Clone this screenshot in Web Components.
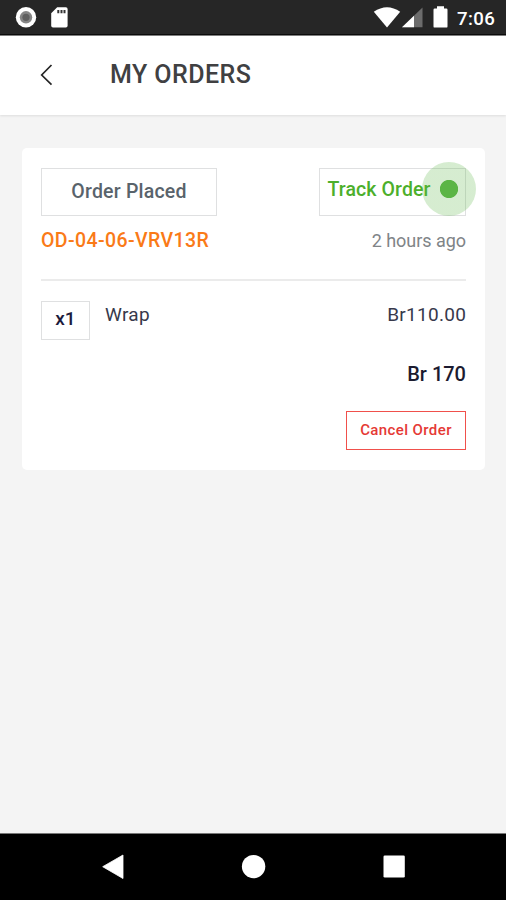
<!DOCTYPE html>
<html lang="en"><head><meta charset="utf-8"><title>My Orders</title>
<style>
html,body{margin:0;height:100%}
body{font-family:Roboto,"Liberation Sans",sans-serif;background:#f4f4f4;overflow:hidden}
</style></head><body>
<orders-screen></orders-screen>
<script>
const define = (name, html) => customElements.define(name, class extends HTMLElement {
  constructor() {
    super();
    const t = document.createElement('template');
    t.innerHTML = html;
    this.attachShadow({mode: 'open'}).append(t.content.cloneNode(true));
  }
});

define('status-bar', `<style>
:host{display:block;height:36px;background:linear-gradient(#262626 34px,#0b0b0b 34px 35px,#777 35px);color:#fff}
.bar{display:flex;height:36px;align-items:flex-start}
svg{display:block;flex:none}
.time{font-size:18.6px;font-weight:500;line-height:22px;margin:8px 0 0 8px;letter-spacing:.4px;white-space:nowrap}
</style><div class="bar">
<svg width="80" height="35" viewBox="0 0 80 35"><circle cx="26" cy="17.3" r="10.2" fill="#fff"/><circle cx="26" cy="17.3" r="6.2" fill="#858585"/><circle cx="26" cy="17.3" r="3.6" fill="#5f5f5f"/><path d="M57.2 7.3h8.6q1.8 0 1.8 1.8v16.6q0 1.8-1.8 1.8H53q-1.800 0-1.800-1.800V13.300z" fill="#fff"/><path d="M57.300 10h2v3.300h-2zM60.500 10h2v3.300h-2zM63.500 10h2v3.300h-2z" fill="#333"/></svg>
<svg width="79" height="35" viewBox="370 0 79 35" style="margin-left:290px"><path d="M373.800 11.800Q387 2.500 400.200 11.800L387 27.600z" fill="#fff"/><path d="M402 27.300L422.500 7.500V27.300z" fill="#6c6c6c"/><path d="M402 27.300L414 15.700V27.300z" fill="#fff"/><path d="M437 6.300h7v2.200h2.300q1.200 0 1.200 1.200v16.700q0 1.200-1.200 1.200h-11.600q-1.200 0-1.200-1.200V9.700q0-1.200 1.200-1.200H437z" fill="#fff"/></svg>
<span class="time">7:06</span></div>`);

define('page-header', `<style>
:host{display:flex;box-sizing:border-box;height:79px;background:#fff;box-shadow:0 1px 2px #dedede;align-items:flex-start;padding-left:38px}
svg{margin-top:27px;flex:none}
h1{margin:24px 0 0 52px;font-size:25px;line-height:30px;font-weight:500;color:#404042;letter-spacing:.45px;white-space:nowrap}
</style><svg width="20" height="24" viewBox="0 0 20 24"><path d="M13.500 2L3.700 12L13.500 21.600" fill="none" stroke="#252525" stroke-width="1.700"/></svg><h1><slot></slot></h1>`);

define('outline-box', `<style>
:host{display:flex;box-sizing:border-box;border:1.500px solid var(--line,#dfe0e1);align-items:center;justify-content:center;white-space:nowrap;flex:none}
</style><slot></slot>`);

define('pulse-dot', `<style>
:host{display:block;width:54px;height:54px;border-radius:50%;background:radial-gradient(circle at 50% 50%,#5bb545 0 8.700px,#5bb54540 9.500px)}
</style>`);

define('order-item', `<style>
:host{display:flex;align-items:flex-start;color:#37394b;font-size:19px;line-height:28px}
outline-box{width:49px;height:39px;color:#1c1b3c;font-size:19px;font-weight:500;box-sizing:border-box;padding-bottom:3px}
.name{margin-left:15px;letter-spacing:.3px}.price{margin-left:auto;letter-spacing:.3px;margin-right:-.3px}
</style><outline-box><slot name="qty"></slot></outline-box><span class="name"><slot></slot></span><span class="price"><slot name="price"></slot></span>`);

define('order-card', `<style>
:host{display:block;box-sizing:border-box;width:463px;height:322px;margin:33px 0 0 22px;padding:19.500px 19px 0 19px;background:#fff;border-radius:5px}
.row{display:flex;justify-content:space-between;align-items:flex-start}
.placed{width:176px;height:48px;box-sizing:border-box;color:#59636b;font-size:19.500px;font-weight:500;padding-bottom:1px;letter-spacing:.2px}
.track{position:relative;width:147.500px;height:48px;color:#4caf2b;font-size:19.500px;font-weight:500;justify-content:flex-start;padding:0 0 5px 8px;letter-spacing:.1px}
pulse-dot{position:absolute;left:102px;top:-7px}
.meta{margin-top:12px;line-height:26px;font-size:19px;white-space:nowrap}
.id{color:#fa7a17;font-weight:500;font-size:19.500px;letter-spacing:.4px}.ago{color:#808487;font-size:18px;letter-spacing:-.03px}
.line{height:1.500px;background:#ebebeb;margin-top:25.500px}
.total{margin-top:21px;line-height:26px;font-size:20px;font-weight:500;color:#1c1b30;text-align:right}
.actions{display:flex;justify-content:flex-end;margin-top:24px}
.cancel{width:120px;height:39px;--line:#f0504b;color:#e53935;font-size:15px;font-weight:500;padding-bottom:1px;letter-spacing:.4px}
</style>
<div class="row"><outline-box class="placed"><slot name="status"></slot></outline-box><outline-box class="track"><span>Track Order</span><pulse-dot></pulse-dot></outline-box></div>
<div class="row meta"><span class="id"><slot name="id"></slot></span><span class="ago"><slot name="ago"></slot></span></div>
<div class="line"></div><slot></slot>
<div class="total"><slot name="total"></slot></div>
<div class="actions"><outline-box class="cancel">Cancel Order</outline-box></div>`);

define('nav-bar', `<style>
:host{display:flex;height:66px;background:#000;box-shadow:0 -1px #777;align-items:center;justify-content:center}
svg{display:block}
</style><svg width="506" height="66" viewBox="0 834 506 66"><path d="M102.700 866.700L123 855v23.500z" fill="#fff" stroke="#fff" stroke-width=".8" stroke-linejoin="round"/><circle cx="253.600" cy="866.600" r="11.700" fill="#fff"/><rect x="383.500" y="855.500" width="21.300" height="22" rx="1.300" fill="#fff"/></svg>`);

define('orders-screen', `<style>
:host{display:flex;flex-direction:column;width:506px;height:900px;background:#f4f4f4}
nav-bar{margin-top:auto}order-item{margin-top:20px}
</style><status-bar></status-bar><page-header>MY ORDERS</page-header>
<order-card><span slot="status">Order Placed</span><span slot="id">OD-04-06-VRV13R</span><span slot="ago">2 hours ago</span>
<order-item><span slot="qty">x1</span>Wrap<span slot="price">Br110.00</span></order-item>
<span slot="total">Br 170</span></order-card><nav-bar></nav-bar>`);
</script></body></html>
